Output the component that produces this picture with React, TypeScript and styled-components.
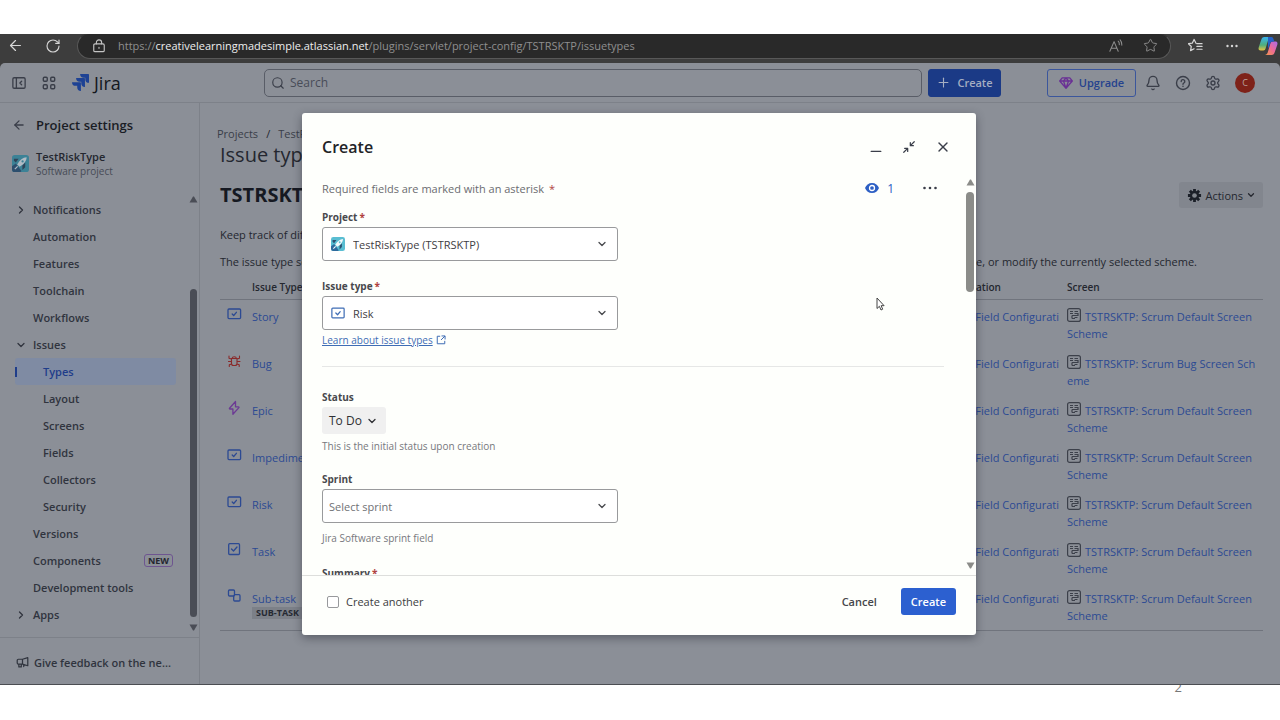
import React from "react";
import styled, { createGlobalStyle } from "styled-components";
import { ArrowLeft, RotateCw, Star, Search, Plus, Bell, Settings, ChevronDown, ChevronRight, X } from "lucide-react";

const ink = "#24272f";
const dimText = "#3a3e49";
const dimBlue = "#2c4a93";
const line = "#7d8189";

const GlobalStyle = createGlobalStyle`
  *, *::before, *::after { box-sizing: border-box; }
  body { margin: 0; background: #fff; }
  body, button, input, select { font-family: "Open Sans", "Noto Sans", sans-serif; }
  svg { display: block; flex: none; }
  a { text-decoration: none; }
`;

const Slide = styled.div`
  display: grid;
  grid-template-rows: 34px minmax(0, 1fr) 35px;
  height: 100vh;
  min-height: 600px;
`;
const Capture = styled.div`
  grid-row: 2;
  display: flex;
  flex-direction: column;
  overflow: hidden;
  background: #3d3d3d;
  border-bottom: 1px solid #4b4d52;
`;
const SlideFooter = styled.footer`
  grid-row: 3;
  overflow: hidden;
  padding-right: 98px;
  text-align: right;
  font-size: 13px;
  line-height: 4px;
  color: #777;
`;

/* Browser bar */
const BrowserBar = styled.div`
  display: flex;
  align-items: center;
  height: 29px;
  flex: none;
  padding: 0 2px 6px 7px;
  color: #d6d6d6;
`;
const BarButton = styled.button<{ $gap?: number }>`
  display: flex;
  padding: 0;
  margin-left: ${(p) => p.$gap ?? 0}px;
  border: 0;
  background: none;
  color: inherit;
`;
const Address = styled.div`
  display: flex;
  flex: 1;
  align-items: center;
  height: 26px;
  margin: 0 17px 0 16px;
  padding: 0 12px 0 14px;
  border: 1px solid #585858;
  border-top-color: #333;
  border-radius: 13px;
  background: #292929;
  color: #8f8f8f;
`;
const LockIcon = styled.span`
  color: #c4c4c4;
`;
const Url = styled.span`
  flex: 1;
  padding-left: 12px;
  font-size: 11px;
  white-space: nowrap;
  overflow: hidden;
  b { font-weight: 500; color: #eee; }
`;

/* Jira page */
const Page = styled.div`
  position: relative;
  display: flex;
  flex: 1;
  flex-direction: column;
  min-height: 0;
  border-radius: 5px 5px 0 0;
  background: #8b8f97;
  color: ${ink};
`;
const TopNav = styled.header`
  display: flex;
  align-items: center;
  height: 40px;
  flex: none;
  padding: 0 25px 0 12px;
  border-bottom: 1px solid ${line};
`;
const NavStart = styled.div`
  display: flex;
  align-items: center;
  gap: 16px;
  width: 252px;
  flex: none;
`;
const Brand = styled.a`
  display: flex;
  align-items: center;
  gap: 5px;
  color: #14171e;
  font-size: 18px;
  line-height: 24px;
  font-weight: 500;
`;
const IconButton = styled.button`
  display: flex;
  padding: 0;
  border: 0;
  background: none;
  color: ${dimText};
`;
const SearchBox = styled.label`
  display: flex;
  flex: 1;
  align-items: center;
  gap: 5px;
  height: 28px;
  padding: 0 6px;
  border: 1px solid #595d67;
  border-radius: 5px;
  color: ${dimText};
  input {
    flex: 1;
    min-width: 0;
    padding: 0;
    border: 0;
    outline: 0;
    background: none;
    font-size: 12px;
    color: ${ink};
  }
  input::placeholder { color: #484c57; opacity: 1; }
`;
const NavButton = styled.button<{ $primary?: boolean }>`
  display: flex;
  align-items: center;
  justify-content: center;
  gap: 6px;
  height: 28px;
  padding: 0;
  width: ${(p) => (p.$primary ? 73 : 89)}px;
  margin-left: ${(p) => (p.$primary ? 6 : 46)}px;
  border: 1px solid ${(p) => (p.$primary ? "#1b3a86" : "#3b569c")};
  border-radius: 3px;
  background: ${(p) => (p.$primary ? "#1b3a86" : "transparent")};
  color: ${(p) => (p.$primary ? "#a5aec2" : "#25428e")};
  font-size: 11px;
  font-weight: 600;
`;
const NavEnd = styled.div`
  display: flex;
  align-items: center;
  gap: 14px;
  padding-left: 9px;
`;
const Avatar = styled.span`
  display: grid;
  place-items: center;
  width: 20px;
  height: 20px;
  border-radius: 50%;
  background: #7e2219;
  color: #b9a19f;
  font-size: 9px;
`;
const Columns = styled.div`
  display: flex;
  flex: 1;
  min-height: 0;
`;

/* Sidebar */
const Sidebar = styled.aside`
  display: flex;
  flex-direction: column;
  flex: none;
  width: 200px;
  border-right: 1px solid ${line};
`;
const SideTitle = styled.div`
  display: flex;
  align-items: center;
  gap: 10px;
  height: 43px;
  padding-left: 12px;
  h2 { margin: 0; font-size: 13px; font-weight: 600; color: #1a1d25; }
`;
const ProjectCard = styled.div`
  display: flex;
  align-items: center;
  gap: 7px;
  height: 35px;
  padding-left: 12px;
  font-size: 11px;
  line-height: 15px;
  font-weight: 600;
  small { display: block; font-size: 10px; font-weight: 400; color: #474b56; }
`;
const SideScroll = styled.div`
  display: flex;
  flex: 1;
  min-height: 0;
  margin-top: 11px;
  overflow: hidden;
`;
const SideList = styled.ul`
  flex: 1;
  margin: 0;
  padding: 4px 11px 0 15px;
  list-style: none;
`;
const SideLink = styled.a<{ $nested?: boolean; $active?: boolean }>`
  display: flex;
  align-items: center;
  height: 27px;
  border-radius: 3px;
  background: ${(p) => (p.$active ? "#7f8ba3" : "transparent")};
  color: ${(p) => (p.$active ? "#1f3d8a" : "#30343e")};
  font-size: 11px;
  font-weight: 600;
  white-space: nowrap;
`;
const Marker = styled.span<{ $nested?: boolean; $active?: boolean }>`
  flex: none;
  width: ${(p) => (p.$nested ? 28 : 18)}px;
  &::before {
    content: "";
    display: ${(p) => (p.$active ? "block" : "none")};
    width: 2px;
    height: 10px;
    background: #1f3d8a;
  }
`;
const NewBadge = styled.span`
  margin-left: auto;
  margin-right: 3px;
  padding: 0 3px;
  border: 1px solid #6e5590;
  border-radius: 3px;
  color: ${ink};
  font-size: 9px;
  line-height: 11px;
  font-weight: 700;
`;
const ScrollColumn = styled.div<{ $color: string }>`
  display: flex;
  flex-direction: column;
  align-items: center;
  flex: none;
  width: 12px;
  padding: 4px 0 6px;
  color: ${(p) => p.$color};
`;
const SideThumb = styled.div`
  width: 7px;
  flex: 1;
  margin: 86px 0 7px;
  border-radius: 4px;
  background: #4a4d56;
`;
const Feedback = styled.button`
  display: flex;
  align-items: center;
  gap: 5px;
  height: 47px;
  padding: 2px 0 0 16px;
  border: 0;
  border-top: 1px solid ${line};
  background: none;
  color: #30343e;
  font-size: 11px;
  font-weight: 600;
`;

/* Main content */
const Main = styled.main`
  flex: 1;
  min-width: 0;
  padding: 23px 17px 0 20px;
  h1 { margin: 0; font-size: 20px; line-height: 25px; font-weight: 500; }
  h2 { margin: 0; font-size: 20px; line-height: 26px; font-weight: 700; color: #161922; }
`;
const Crumbs = styled.nav`
  display: flex;
  gap: 8px;
  margin-left: -3px;
  font-size: 11px;
  line-height: 16px;
  a { color: ${dimText}; }
`;
const SchemeRow = styled.div`
  display: flex;
  justify-content: space-between;
  margin: 15px 0 18px;
`;
const ActionsButton = styled.button`
  display: flex;
  align-items: center;
  gap: 3px;
  height: 26px;
  padding: 0 7px 0 8px;
  border: 0;
  border-radius: 3px;
  background: #82868e;
  color: ${ink};
  font-size: 11px;
`;
const Note = styled.p`
  display: flex;
  justify-content: space-between;
  margin: 0 66px 10px 0;
  font-size: 11px;
  line-height: 17px;
  white-space: nowrap;
`;
const Table = styled.table`
  width: 100%;
  border-collapse: collapse;
  table-layout: fixed;
  border-bottom: 1px solid #70747d;
  font-size: 11px;
  line-height: 17px;
  th {
    padding: 0 0 4px 7px;
    border-bottom: 1px solid #70747d;
    text-align: left;
    font-size: 10px;
    line-height: 15px;
    font-weight: 600;
    white-space: nowrap;
  }
  th:first-child { padding-left: 32px; }
  td {
    height: 47px;
    padding: 8px 0 4px 7px;
    vertical-align: top;
    white-space: nowrap;
  }
  td:first-child { padding-top: 6px; }
  tr:last-child td { height: 49px; }
  a { color: ${dimBlue}; }
`;
const TypeCell = styled.div`
  display: flex;
  gap: 9px;
  > div { padding-top: 2px; }
`;
const SubBadge = styled.span`
  display: block;
  padding: 0 4px;
  background: #7c8088;
  color: #252932;
  font-size: 9px;
  line-height: 12px;
  font-weight: 700;
`;
const InlineIcon = styled.span<{ $gap: number }>`
  display: inline-block;
  vertical-align: -1px;
  margin-right: ${(p) => p.$gap}px;
`;

/* Create dialog */
const Blanket = styled.div`
  position: absolute;
  inset: 0;
  display: flex;
  justify-content: center;
  padding: 50px 2px 49px 0;
`;
const Dialog = styled.section`
  position: relative;
  display: flex;
  flex-direction: column;
  width: 674px;
  max-width: 90%;
  border-radius: 3px;
  background: #fefffc;
  box-shadow: 0 3px 10px rgba(30, 34, 44, 0.45);
  color: #3c3d40;
`;
const DialogHeader = styled.header`
  display: flex;
  align-items: center;
  justify-content: space-between;
  flex: none;
  height: 62px;
  padding: 6px 25px 0 20px;
  h2 { margin: 0; font-size: 16px; line-height: 24px; font-weight: 600; color: #222327; }
`;
const WindowButtons = styled.div`
  display: flex;
  align-items: center;
  gap: 19px;
`;
const DialogBody = styled.div`
  display: flex;
  flex: 1;
  min-height: 0;
  overflow: hidden;
`;
const Form = styled.form`
  flex: 1;
  padding: 3px 20px 0;
`;
const FormTop = styled.div`
  display: flex;
  align-items: center;
  height: 20px;
  margin-bottom: 11px;
  padding-right: 6px;
  font-size: 11px;
  color: #6b6c70;
  > span { flex: 1; }
`;
const Req = styled.i`
  margin-left: 2px;
  color: #b0423f;
  font-style: normal;
`;
const WatchButton = styled.button`
  display: flex;
  align-items: center;
  gap: 8px;
  margin-right: 28px;
  padding: 0;
  border: 0;
  background: none;
  color: #2d5fc4;
  font-size: 12px;
`;
const Field = styled.div<{ $after: number }>`
  display: flex;
  flex-direction: column;
  align-items: flex-start;
  margin-bottom: ${(p) => p.$after}px;
`;
const Label = styled.label`
  margin-bottom: 2px;
  font-size: 10px;
  line-height: 16px;
  font-weight: 700;
  color: #48494d;
`;
const SelectBox = styled.div<{ $icon?: boolean; $muted?: boolean }>`
  position: relative;
  width: 296px;
  max-width: 100%;
  select {
    width: 100%;
    height: 34px;
    padding: 0 30px 0 ${(p) => (p.$icon ? 30 : 6)}px;
    border: 1px solid #999a9c;
    border-radius: 3px;
    appearance: none;
    background: #fff;
    color: ${(p) => (p.$muted ? "#707175" : "#3f4044")};
    font-size: 11px;
  }
`;
const Adorn = styled.span<{ $end?: boolean }>`
  position: absolute;
  top: 0;
  bottom: 0;
  ${(p) => (p.$end ? "right: 10px;" : "left: 9px;")}
  display: flex;
  align-items: center;
  color: ${(p) => (p.$end ? "#48494d" : "#3f6db5")};
  pointer-events: none;
`;
const LearnLink = styled.a`
  display: flex;
  align-items: center;
  gap: 3px;
  margin-top: 2px;
  color: #3f6db5;
  font-size: 10px;
  line-height: 16px;
  text-decoration: underline;
`;
const Hint = styled.span<{ $before: number }>`
  margin-top: ${(p) => p.$before}px;
  font-size: 10px;
  line-height: 16px;
  color: #77787c;
`;
const Divider = styled.hr`
  margin: 0 0 22px;
  border: 0;
  border-top: 1px solid #e6e7e6;
`;
const StatusButton = styled.button`
  display: flex;
  align-items: center;
  gap: 4px;
  height: 27px;
  padding: 0 8px 0 7px;
  border: 0;
  border-radius: 3px;
  background: #f0f0f0;
  color: #2f3034;
  font-size: 12px;
  font-weight: 500;
`;
const DialogThumb = styled.div`
  width: 8px;
  height: 100px;
  margin: 6px 0 auto;
  border-radius: 4px;
  background: #8b8c89;
`;
const DialogFooter = styled.footer`
  display: flex;
  align-items: center;
  flex: none;
  height: 60px;
  padding: 0 20px 8px 25px;
  border-top: 1px solid #dddedc;
`;
const CheckLabel = styled.label`
  display: flex;
  align-items: center;
  gap: 7px;
  flex: 1;
  font-size: 11px;
  input {
    width: 12px;
    height: 12px;
    margin: 0;
    appearance: none;
    border: 1px solid #98999c;
    border-radius: 2px;
    background: #fff;
  }
`;
const FooterButton = styled.button<{ $primary?: boolean }>`
  height: 27px;
  padding: 0 10px;
  margin-left: 14px;
  border: 0;
  border-radius: 3px;
  background: ${(p) => (p.$primary ? "#2c60d0" : "transparent")};
  color: ${(p) => (p.$primary ? "#fff" : "#45464a")};
  font-size: 11px;
  font-weight: 600;
`;
const Pointer = styled.svg`
  position: absolute;
  left: 574px;
  top: 184px;
`;

/* Icons */
const Stroke = ({ size = 16, w = 1.4, children }: { size?: number; w?: number; children: React.ReactNode }) => (
  <svg width={size} height={size} viewBox="0 0 16 16" fill="none" stroke="currentColor" strokeWidth={w} strokeLinecap="round" strokeLinejoin="round" aria-hidden="true">
    {children}
  </svg>
);
const Triangle = ({ down }: { down?: boolean }) => (
  <svg width="9" height="7" viewBox="0 0 9 7" fill="currentColor" aria-hidden="true">
    <path d={down ? "M.5.5h8L5 6.5H4z" : "M.5 6.5h8L5 .5H4z"} />
  </svg>
);
type TypeKind = "screen" | "bug" | "epic" | "task" | "sub";
const TypeIcon = ({ kind }: { kind: TypeKind }) => {
  if (kind === "screen")
    return (
      <Stroke w={1.3}>
        <rect x="1" y="3" width="12.6" height="9.6" rx="1" />
        <path d="m5.200 8 1.500 1.500L9.400 6.300" />
      </Stroke>
    );
  if (kind === "bug")
    return (
      <Stroke w={1.1}>
        <path d="M4.500 5.500h5.500v5a2 2 0 0 1-2 2H6.500a2 2 0 0 1-2-2zM5 5.500a2.300 2.300 0 0 1 4.500 0M4.500 8.500h-3M13 8.500h-3M4.500 6 2 5.200V3M10 6l2.500-.8V3M4.600 11l-2.300.8v1.700M9.900 11l2.300.8v1.700" />
      </Stroke>
    );
  if (kind === "epic")
    return (
      <Stroke w={1.3}>
        <path d="M8.500 1.500 2.500 8.200c-.3.400 0 .8.400.8h3v5.300l6-6.700c.3-.4 0-.8-.4-.8h-3z" />
      </Stroke>
    );
  if (kind === "task")
    return (
      <Stroke w={1.3}>
        <rect x="1.700" y="2.700" width="10.800" height="10.800" rx="1" />
        <path d="m4.500 8 2 2 3.500-4" />
      </Stroke>
    );
  return (
    <Stroke w={1.3}>
      <rect x="1.500" y="2" width="6" height="6" rx="1" />
      <path d="M7.500 6.700H12a1 1 0 0 1 1 1V12a1 1 0 0 1-1 1H7.700a1 1 0 0 1-1-1V8" />
    </Stroke>
  );
};
const SchemeIcon = () => (
  <svg width="14" height="14" viewBox="0 0 14 14" fill="none" stroke="#3c404a" strokeWidth="1.200" aria-hidden="true">
    <rect x=".6" y=".6" width="12.800" height="12.800" rx="2" />
    <path d="M3 3.500h3M7.500 3.500H11M3 5.500h3M7.500 5.500H11v2H5M5 7.500v3M7.500 9.500h3M5 10.500h3" />
  </svg>
);
const Rocket = ({ size, dim }: { size: number; dim?: boolean }) => (
  <svg width={size} height={size} viewBox="0 0 18 18" opacity={dim ? 0.85 : 1} aria-hidden="true">
    <rect width="18" height="18" rx="3" fill={dim ? "#2f8096" : "#59bdd2"} />
    <path d="M0 12 4 9l6 8-1 1H3a3 3 0 0 1-3-3z" fill={dim ? "#1d4468" : "#2e6a9d"} />
    <path d="M2 4h5L4 8 2 6zM11 11l3-3v5l-3 3z" fill={dim ? "#20384f" : "#2c5070"} />
    <path d="M15.500 2.500c-4 .2-7.500 3-10 7.500l2.500 2.500c4.500-2.500 7.300-6 7.500-10z" fill={dim ? "#b8c3cd" : "#f5f9fb"} />
    <circle cx="11.200" cy="6.800" r="1.200" fill={dim ? "#2f8096" : "#59bdd2"} />
    <path d="m3 15 3-3" stroke={dim ? "#b8c3cd" : "#fff"} strokeWidth="1.300" />
  </svg>
);
const Gear = () => (
  <svg width="15" height="15" viewBox="0 0 16 16" aria-hidden="true">
    <g stroke="#1c2029" strokeWidth="3">
      <path d="M8 1v14M1 8h14M3.050 3.050l9.900 9.900M12.950 3.050l-9.900 9.900" />
    </g>
    <circle cx="8" cy="8" r="5" fill="#1c2029" />
    <circle cx="8" cy="8" r="2.500" fill="#82868e" />
  </svg>
);

const sideItems: { text: string; nested?: boolean; active?: boolean; open?: boolean; closed?: boolean; badge?: boolean }[] = [
  { text: "Notifications", closed: true },
  { text: "Automation" },
  { text: "Features" },
  { text: "Toolchain" },
  { text: "Workflows" },
  { text: "Issues", open: true },
  { text: "Types", nested: true, active: true },
  { text: "Layout", nested: true },
  { text: "Screens", nested: true },
  { text: "Fields", nested: true },
  { text: "Collectors", nested: true },
  { text: "Security", nested: true },
  { text: "Versions" },
  { text: "Components", badge: true },
  { text: "Development tools" },
  { text: "Apps", closed: true },
];
const defaultScreen: [string, string] = ["Scrum Default Screen", "Scheme"];
const issueTypes: { name: string; kind: TypeKind; color: string; screen: [string, string] }[] = [
  { name: "Story", kind: "screen", color: dimBlue, screen: defaultScreen },
  { name: "Bug", kind: "bug", color: "#8a2a2a", screen: ["Scrum Bug Screen Sch", "eme"] },
  { name: "Epic", kind: "epic", color: "#6c3a94", screen: defaultScreen },
  { name: "Impediment", kind: "screen", color: dimBlue, screen: defaultScreen },
  { name: "Risk", kind: "screen", color: dimBlue, screen: defaultScreen },
  { name: "Task", kind: "task", color: dimBlue, screen: defaultScreen },
  { name: "Sub-task", kind: "sub", color: dimBlue, screen: defaultScreen },
];

const Browser = () => (
  <BrowserBar>
    <BarButton aria-label="Back"><ArrowLeft size={17} strokeWidth={1.7} /></BarButton>
    <BarButton aria-label="Reload" $gap={21}><RotateCw size={16} strokeWidth={1.7} /></BarButton>
    <Address>
      <LockIcon>
        <Stroke size={14} w={1.3}>
          <rect x="2" y="5.500" width="12" height="9" rx="1.500" />
          <path d="M5 5.500V4a3 3 0 0 1 6 0v1.500M8 9.500v1.200" />
        </Stroke>
      </LockIcon>
      <Url>https://<b>creativelearningmadesimple.atlassian.net</b>/plugins/servlet/project-config/TSTRSKTP/issuetypes</Url>
      <BarButton aria-label="Read aloud">
        <Stroke size={14} w={1.2}>
          <path d="M1 14 5.800 3l4.700 11M2.800 10.500h6M10.500 2.500q1.500 1.500 1.300 4M12.700 1q2.300 2.500 2 6" />
        </Stroke>
      </BarButton>
      <BarButton aria-label="Favorite" $gap={20}><Star size={15} strokeWidth={1.5} /></BarButton>
    </Address>
    <BarButton aria-label="Favorites list">
      <Stroke size={15} w={1.3}>
        <path d="M8.500 5.500 6.500 1.500l-2 4-4 .6 3 3-.8 4.400 3.800-2M9.500 6h5.500M9.500 9h5.500M9.500 12h5.500" />
      </Stroke>
    </BarButton>
    <BarButton aria-label="More" $gap={23}>
      <svg width="12" height="4" viewBox="0 0 12 4" fill="currentColor"><circle cx="1.500" cy="2" r="1.200" /><circle cx="6" cy="2" r="1.200" /><circle cx="10.500" cy="2" r="1.200" /></svg>
    </BarButton>
    <BarButton aria-label="Copilot" $gap={20}>
      <svg width="20" height="18" viewBox="0 0 20 18">
        <defs>
          <linearGradient id="cpa" x1="0" y1="0" x2="0" y2="1"><stop offset="0" stopColor="#38b4ee" /><stop offset=".6" stopColor="#4fae7c" /><stop offset="1" stopColor="#e8c341" /></linearGradient>
          <linearGradient id="cpb" x1="1" y1="0" x2="0" y2="1"><stop offset="0" stopColor="#a96bea" /><stop offset=".5" stopColor="#ee6a96" /><stop offset="1" stopColor="#f59a4a" /></linearGradient>
        </defs>
        <path d="M13 0H6.500C4.500 0 3.800 1.200 3.200 3L.8 10c-.8 2.500.2 3.500 2 3.500h2.500c1.200 0 2-.8 2.300-2L10 3.500C10.500 1.800 11 .5 13 0z" fill="url(#cpa)" />
        <path d="M7 18h6.500c2 0 2.700-1.200 3.300-3l2.400-7c.8-2.500-.2-3.500-2-3.500h-2.500c-1.200 0-2 .8-2.300 2L10 14.500C9.500 16.200 9 17.500 7 18z" fill="url(#cpb)" />
        <path d="M10 0h3.500c1.300 0 1.800 1 2.300 3l.4 1.500h-1.500c-1.500 0-2.300 1-2.700 2.500L10 12z" fill="#2461c7" />
      </svg>
    </BarButton>
  </BrowserBar>
);

const TopBar = () => (
  <TopNav>
    <NavStart>
      <IconButton aria-label="Collapse sidebar">
        <Stroke size={14} w={1.5}><rect x="1" y="2" width="14" height="12" rx="1.500" /><path d="M5 2v12M11 6 9 8l2 2" /></Stroke>
      </IconButton>
      <IconButton aria-label="Switch apps">
        <Stroke size={14} w={1.6}><rect x="1.500" y="1.500" width="4.500" height="4.500" rx="1.200" /><rect x="10" y="1.500" width="4.500" height="4.500" rx="1.200" /><rect x="1.500" y="10" width="4.500" height="4.500" rx="1.200" /><rect x="10" y="10" width="4.500" height="4.500" rx="1.200" /></Stroke>
      </IconButton>
      <Brand href="#">
        <svg width="17" height="17" viewBox="0 0 24 24" fill="#1e4294" aria-hidden="true">
          <path d="M11.571 11.513H0a5.218 5.218 0 0 0 5.232 5.215h2.130v2.057A5.215 5.215 0 0 0 12.575 24V12.518a1.005 1.005 0 0 0-1.005-1.005zm5.723-5.756H5.736a5.215 5.215 0 0 0 5.215 5.214h2.129v2.058a5.218 5.218 0 0 0 5.215 5.214V6.758a1.001 1.001 0 0 0-1.001-1.001zM23.013 0H11.455a5.215 5.215 0 0 0 5.215 5.215h2.129v2.057A5.215 5.215 0 0 0 24 12.483V1.005A1.001 1.001 0 0 0 23.013 0Z" />
        </svg>
        Jira
      </Brand>
    </NavStart>
    <SearchBox>
      <Search size={14} strokeWidth={2} />
      <input placeholder="Search" aria-label="Search" />
    </SearchBox>
    <NavButton $primary><Plus size={15} strokeWidth={1.8} />Create</NavButton>
    <NavButton>
      <svg width="14" height="12" viewBox="0 0 14 12" fill="none" stroke="#6a3195" strokeWidth="1.300" strokeLinejoin="round"><path d="M3.200.8h7.600L13.300 4 7 11.200.7 4zM.7 4h12.600M7 11.200 4.500 4 7 .8 9.500 4z" /></svg>
      Upgrade
    </NavButton>
    <NavEnd>
      <IconButton aria-label="Notifications"><Bell size={16} strokeWidth={2} /></IconButton>
      <IconButton aria-label="Help">
        <Stroke><circle cx="8" cy="8" r="6.500" /><path d="M6.200 6.500a1.800 1.800 0 1 1 2.700 1.500c-.6.4-.9.600-.9 1.200M8 11.300v.1" /></Stroke>
      </IconButton>
      <IconButton aria-label="Settings"><Settings size={16} strokeWidth={2} /></IconButton>
      <Avatar>C</Avatar>
    </NavEnd>
  </TopNav>
);

const ProjectSidebar = () => (
  <Sidebar>
    <SideTitle>
      <IconButton aria-label="Back to project"><ArrowLeft size={14} strokeWidth={2.2} /></IconButton>
      <h2>Project settings</h2>
    </SideTitle>
    <ProjectCard>
      <Rocket size={17} dim />
      <div>TestRiskType<small>Software project</small></div>
    </ProjectCard>
    <SideScroll>
      <SideList>
        {sideItems.map((item) => (
          <li key={item.text}>
            <SideLink href="#" $active={item.active}>
              <Marker $nested={item.nested} $active={item.active}>
                {item.closed && <ChevronRight size={12} strokeWidth={2.6} />}
                {item.open && <ChevronDown size={12} strokeWidth={2.6} />}
              </Marker>
              {item.text}
              {item.badge && <NewBadge>NEW</NewBadge>}
            </SideLink>
          </li>
        ))}
      </SideList>
      <ScrollColumn $color="#4a4d56">
        <Triangle />
        <SideThumb />
        <Triangle down />
      </ScrollColumn>
    </SideScroll>
    <Feedback>
      <Stroke size={13} w={1.5}><path d="M14.500 2v10L8 10H3a1.500 1.500 0 0 1-1.500-1.500v-3A1.500 1.500 0 0 1 3 4h5zM8 4v6M3.500 10v3.500h3V10M9.500 10.500v2.500" /></Stroke>
      Give feedback on the ne...
    </Feedback>
  </Sidebar>
);

const IssueTypes = () => (
  <Main>
    <Crumbs aria-label="Breadcrumbs"><a href="#">Projects</a><span>/</span><a href="#">TestRiskType</a></Crumbs>
    <h1>Issue types</h1>
    <SchemeRow>
      <h2>TSTRSKTP: Scrum Issue Type Scheme</h2>
      <ActionsButton><Gear />Actions<ChevronDown size={10} strokeWidth={3} /></ActionsButton>
    </SchemeRow>
    <Note><span>Keep track of different types of issues, such as bugs or tasks.</span></Note>
    <Note><span>The issue type scheme sets the available types.</span><span>Select another scheme here, or modify the currently selected scheme.</span></Note>
    <Table>
      <colgroup><col /><col /><col style={{ width: 158 }} /><col style={{ width: 203 }} /></colgroup>
      <thead>
        <tr><th>Issue Type</th><th>Workflow</th><th>Field Configuration</th><th>Screen</th></tr>
      </thead>
      <tbody>
        {issueTypes.map((t) => (
          <tr key={t.name}>
            <td>
              <TypeCell>
                <span style={{ color: t.color }}><TypeIcon kind={t.kind} /></span>
                <div><a href="#">{t.name}</a>{t.kind === "sub" && <SubBadge>SUB-TASK</SubBadge>}</div>
              </TypeCell>
            </td>
            <td><a href="#">Software workflow</a></td>
            <td><a href="#"><InlineIcon $gap={12}><SchemeIcon /></InlineIcon>Default Field Configurati<br />on</a></td>
            <td><a href="#"><InlineIcon $gap={4}><SchemeIcon /></InlineIcon>TSTRSKTP: {t.screen[0]}<br />{t.screen[1]}</a></td>
          </tr>
        ))}
      </tbody>
    </Table>
  </Main>
);

const Chevron = () => <Adorn $end><ChevronDown size={12} strokeWidth={2.6} /></Adorn>;

const CreateDialog = () => (
  <Blanket>
    <Dialog role="dialog" aria-labelledby="create-title">
      <DialogHeader>
        <h2 id="create-title">Create</h2>
        <WindowButtons>
          <IconButton type="button" aria-label="Minimize"><Stroke size={14}><path d="M2.500 13h11" /></Stroke></IconButton>
          <IconButton type="button" aria-label="Shrink"><Stroke size={14} w={1.4}><path d="M14 2 9.500 6.500M9.500 3v3.500H13M2 14l4.500-4.500M3 9.500h3.500V13" /></Stroke></IconButton>
          <IconButton type="button" aria-label="Close"><X size={16} strokeWidth={2} /></IconButton>
        </WindowButtons>
      </DialogHeader>
      <DialogBody>
        <Form onSubmit={(e) => e.preventDefault()}>
          <FormTop>
            <span>Required fields are marked with an asterisk <Req>*</Req></span>
            <WatchButton type="button" aria-label="Watchers">
              <svg width="14" height="10" viewBox="0 0 14 10"><path d="M7 0c3.400 0 5.800 2 7 5-1.200 3-3.600 5-7 5S1.200 8 0 5c1.200-3 3.600-5 7-5z" fill="#2d5fc4" /><circle cx="7" cy="5" r="2.500" fill="none" stroke="#fff" strokeWidth="1.300" /></svg>
              1
            </WatchButton>
            <IconButton type="button" aria-label="More">
              <svg width="16" height="4" viewBox="0 0 16 4" fill="currentColor"><circle cx="2.500" cy="2" r="1.300" /><circle cx="8" cy="2" r="1.300" /><circle cx="13.500" cy="2" r="1.300" /></svg>
            </IconButton>
          </FormTop>
          <Field $after={17}>
            <Label htmlFor="project">Project<Req>*</Req></Label>
            <SelectBox $icon>
              <select id="project"><option>TestRiskType (TSTRSKTP)</option></select>
              <Adorn><Rocket size={14} /></Adorn>
              <Chevron />
            </SelectBox>
          </Field>
          <Field $after={18}>
            <Label htmlFor="issue-type">Issue type<Req>*</Req></Label>
            <SelectBox $icon>
              <select id="issue-type"><option>Risk</option></select>
              <Adorn><Stroke size={14}><rect x="1" y="2.500" width="14" height="11" rx="1" /><path d="m5.500 8 2 2 3-3.600" /></Stroke></Adorn>
              <Chevron />
            </SelectBox>
            <LearnLink href="#">
              Learn about issue types
              <Stroke size={10} w={1.6}><path d="M6 2H2v12h12v-4M9.500 1.500h5v5M14 2 8.500 7.500" /></Stroke>
            </LearnLink>
          </Field>
          <Divider />
          <Field $after={17}>
            <Label as="span">Status</Label>
            <StatusButton type="button">To Do<ChevronDown size={12} strokeWidth={2.6} /></StatusButton>
            <Hint $before={4}>This is the initial status upon creation</Hint>
          </Field>
          <Field $after={19}>
            <Label htmlFor="sprint">Sprint</Label>
            <SelectBox $muted>
              <select id="sprint"><option>Select sprint</option></select>
              <Chevron />
            </SelectBox>
            <Hint $before={7}>Jira Software sprint field</Hint>
          </Field>
          <Field $after={0}>
            <Label as="span">Summary<Req>*</Req></Label>
          </Field>
        </Form>
        <ScrollColumn $color="#8b8c89">
          <Triangle />
          <DialogThumb />
          <Triangle down />
        </ScrollColumn>
      </DialogBody>
      <DialogFooter>
        <CheckLabel><input type="checkbox" />Create another</CheckLabel>
        <FooterButton type="button">Cancel</FooterButton>
        <FooterButton type="button" $primary>Create</FooterButton>
      </DialogFooter>
      <Pointer width="9" height="14" viewBox="0 0 9 14" aria-hidden="true">
        <path d="M1 1v10.500l2.400-2.200L5 13l1.700-.8-1.600-3.500h3z" fill="#fff" stroke="#444" strokeWidth="1" strokeLinejoin="round" />
      </Pointer>
    </Dialog>
  </Blanket>
);

export default function App() {
  return (
    <>
      <GlobalStyle />
      <Slide>
        <Capture>
          <Browser />
          <Page>
            <TopBar />
            <Columns>
              <ProjectSidebar />
              <IssueTypes />
            </Columns>
            <CreateDialog />
          </Page>
        </Capture>
        <SlideFooter>2</SlideFooter>
      </Slide>
    </>
  );
}
